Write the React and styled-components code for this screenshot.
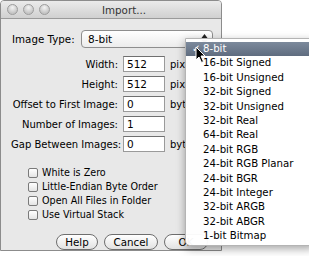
import styled, { createGlobalStyle } from 'styled-components';

const FIELDS = [
  { label: 'Width:', value: '512', unit: 'pix' },
  { label: 'Height:', value: '512', unit: 'pix' },
  { label: 'Offset to First Image:', value: '0', unit: 'byt' },
  { label: 'Number of Images:', value: '1', unit: '' },
  { label: 'Gap Between Images:', value: '0', unit: 'byt' },
];

const OPTIONS = ['White is Zero', 'Little-Endian Byte Order', 'Open All Files in Folder', 'Use Virtual Stack'];

const TYPES = [
  '8-bit', '16-bit Signed', '16-bit Unsigned', '32-bit Signed', '32-bit Unsigned',
  '32-bit Real', '64-bit Real', '24-bit RGB', '24-bit RGB Planar', '24-bit BGR',
  '24-bit Integer', '32-bit ARGB', '32-bit ABGR', '1-bit Bitmap',
];

const GlobalStyle = createGlobalStyle`
  html, body { margin: 0; padding: 0; background: #fff; }
  body { font-family: "DejaVu Sans", "Liberation Sans", sans-serif; }
`;

const App = () => {
  return (
    <Screen>
      <GlobalStyle />
      <Window>
        <TitleBar>
          <Lights>
            <Light />
            <Light />
            <Light />
          </Lights>
          <Title>Import...</Title>
        </TitleBar>
        <Body>
          <TypeRow>
            <TypeLabel>Image Type:</TypeLabel>
            <Popup>
              <span>8-bit</span>
              <Arrows>
                <svg width="7" height="12" viewBox="0 0 7 12">
                  <path d="M3.5 1 L6.5 5 L0.5 5 Z" fill="#222" />
                  <path d="M3.5 11 L6.5 7 L0.5 7 Z" fill="#222" />
                </svg>
              </Arrows>
            </Popup>
          </TypeRow>
          <Fields>
            {FIELDS.map((f) => (
              <FieldRow key={f.label}>
                <FieldLabel>{f.label}</FieldLabel>
                <Input>{f.value}</Input>
                <Unit>{f.unit}</Unit>
              </FieldRow>
            ))}
          </Fields>
          <Checks>
            {OPTIONS.map((o) => (
              <CheckRow key={o}>
                <Box />
                {o}
              </CheckRow>
            ))}
          </Checks>
          <Buttons>
            <Button $w={42}>Help</Button>
            <Button $w={54}>Cancel</Button>
            <Button $w={44}>OK</Button>
          </Buttons>
        </Body>
      </Window>
      <Menu>
        {TYPES.map((t, i) => (
          <MenuItem key={t} $active={i === 0}>
            {i === 0 && <Check>✓</Check>}
            {t}
          </MenuItem>
        ))}
      </Menu>
      <Cursor width="12" height="18" viewBox="0 0 12 18">
        <path d="M1 1 L1 14 L4 11 L6.5 16.5 L8.5 15.5 L6 10 L10 10 Z" fill="#000" stroke="#fff" strokeWidth="1" />
      </Cursor>
    </Screen>
  );
};

const Screen = styled.div`
  position: relative;
  width: 309px;
  height: 256px;
  overflow: hidden;
  background: #fff;
`;

const Window = styled.div`
  width: 222px;
  height: 251px;
  box-sizing: border-box;
  border: 1px solid #8c8c8c;
  border-radius: 4px 4px 0 0;
  background: #e8e8e8;
  overflow: hidden;
`;

const TitleBar = styled.div`
  height: 17px;
  display: flex;
  align-items: center;
  background: linear-gradient(#ebebeb, #d0d0d0);
  border-bottom: 1px solid #9a9a9a;
`;

const Lights = styled.div`
  display: flex;
  gap: 5px;
  padding-left: 6px;
`;

const Light = styled.div`
  width: 11px;
  height: 11px;
  border-radius: 50%;
  box-sizing: border-box;
  border: 1px solid #9c9c9c;
  background: radial-gradient(circle at 50% 30%, #f4f4f4, #c4c4c4 70%);
`;

const Title = styled.div`
  margin-left: 52px;
  font-size: 10.3px;
  color: #333;
`;

const Body = styled.div`
  padding: 11px 0 0 10px;
  font-size: 10px;
  color: #000;
`;

const TypeRow = styled.div`
  display: flex;
  align-items: center;
  height: 18px;
`;

const TypeLabel = styled.div`
  width: 69px;
  padding-left: 1px;
  font-size: 10.3px;
`;

const Popup = styled.div`
  width: 132px;
  height: 18px;
  box-sizing: border-box;
  border: 1px solid #8e8e8e;
  border-radius: 4px;
  background: linear-gradient(#ffffff, #ececec);
  display: flex;
  align-items: center;
  justify-content: space-between;
  padding: 0 4px 0 6px;
  font-size: 10.5px;
`;

const Arrows = styled.div`
  display: flex;
  align-items: center;
`;

const Fields = styled.div`
  display: flex;
  flex-direction: column;
  gap: 4px;
  margin-top: 8px;
`;

const FieldRow = styled.div`
  display: flex;
  align-items: center;
  height: 16px;
`;

const FieldLabel = styled.div`
  width: 107px;
  text-align: right;
  white-space: nowrap;
`;

const Input = styled.div`
  width: 42px;
  height: 16px;
  margin-left: 5px;
  box-sizing: border-box;
  border: 1px solid #9a9a9a;
  border-top-color: #6f6f6f;
  background: #fff;
  padding-left: 3px;
  line-height: 14px;
  font-size: 10.5px;
`;

const Unit = styled.div`
  margin-left: 5px;
`;

const Checks = styled.div`
  display: flex;
  flex-direction: column;
  gap: 1px;
  margin-top: 14px;
  padding-left: 17px;
`;

const CheckRow = styled.div`
  display: flex;
  align-items: center;
  gap: 4px;
  height: 13px;
  font-size: 9.6px;
  white-space: nowrap;
`;

const Box = styled.div`
  width: 10px;
  height: 10px;
  box-sizing: border-box;
  border: 1px solid #7a7a7a;
  border-radius: 2px;
  background: linear-gradient(#ffffff, #e4e4e4);
`;

const Buttons = styled.div`
  display: flex;
  gap: 6px;
  margin-top: 13px;
  padding-left: 45px;
`;

const Button = styled.div`
  width: ${(p) => p.$w}px;
  height: 16px;
  flex: none;
  box-sizing: border-box;
  border: 1px solid #6e6e6e;
  border-radius: 8px;
  background: linear-gradient(#ffffff, #e2e2e2);
  display: flex;
  align-items: center;
  justify-content: center;
  font-size: 10.3px;
`;

const Menu = styled.div`
  position: absolute;
  left: 185px;
  top: 38px;
  width: 130px;
  box-sizing: border-box;
  padding: 3px 0 2px;
  background: rgba(255, 255, 255, 0.96);
  border: 1px solid #b4b4b4;
  border-radius: 0 0 5px 5px;
  box-shadow: 0 3px 8px rgba(0, 0, 0, 0.35);
  font-size: 10.2px;
`;

const MenuItem = styled.div`
  position: relative;
  height: 14.4px;
  line-height: 14.4px;
  padding-left: 17px;
  white-space: nowrap;
  color: ${(p) => (p.$active ? '#fff' : '#000')};
  background: ${(p) => (p.$active ? 'linear-gradient(#7c8a9c, #5f6c7f)' : 'transparent')};
`;

const Check = styled.span`
  position: absolute;
  left: 6px;
  top: 0;
  font-weight: bold;
`;

const Cursor = styled.svg`
  position: absolute;
  left: 195px;
  top: 46px;
`;

export default App;
